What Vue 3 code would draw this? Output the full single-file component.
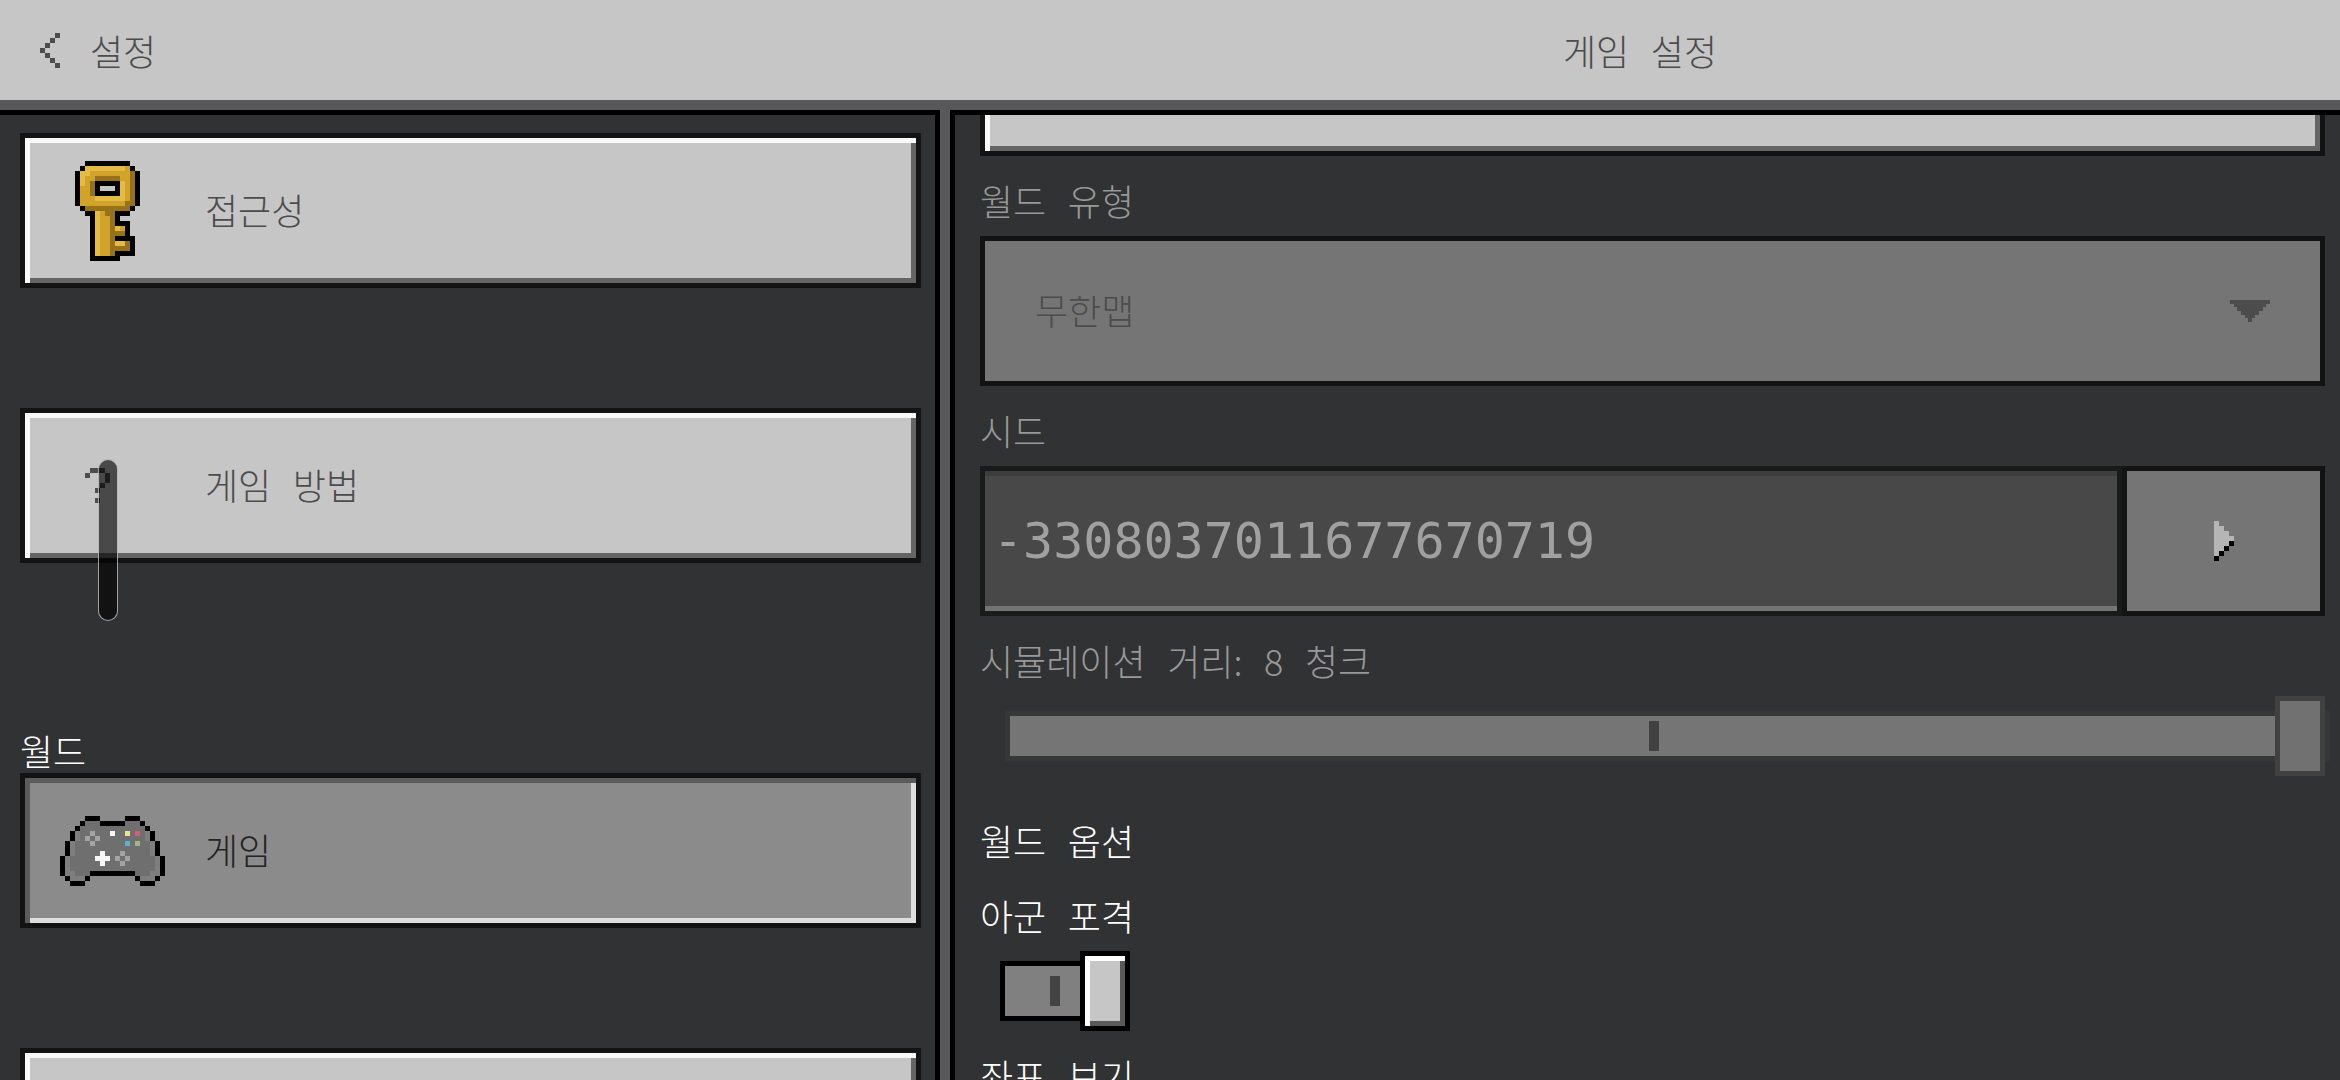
<script setup>
import { h, ref } from 'vue'

const palette = {
    K: '#000000',
    L: '#e4bb47',
    M: '#d2a32b',
    D: '#987219',
    G: '#6f6f6f',
    H: '#7e7e7e',
    S: '#a3a3a3',
    W: '#f6f6f6',
    Y: '#e6e394',
    R: '#d0607a',
    B: '#5fb0cf',
    N: '#9cb783',
    Q: '#4c4c4c',
    P: '#b5b5b5',
}

const icons = {
    back: ['...Q', '..Q.', '.Q..', 'Q...', '.Q..', '..Q.', '...Q'],
    key: [
        '.....KKKKKKKKK.......',
        '....KLLLLLLLLMK......',
        '...KLLMMMMMMMMDK.....',
        '...KLMMDDDDDMMDK.....',
        '...KLMDKKKKKLMDK.....',
        '...KMMDK...KLMDK.....',
        '...KMMDKKKKKLMDK.....',
        '...KMMMLLLLLLMDK.....',
        '...KMMMMMMMMMDDK.....',
        '....KDDDDDDDDDK......',
        '.....KKLMDDKKK.......',
        '......KLMMDK.........',
        '......KLMMDKKK.......',
        '......KLMMDLMK.......',
        '......KLMMDDDK.......',
        '......KLMMDKKKK......',
        '......KLMMDLLDK......',
        '......KLMMDDDDK......',
        '......KLMMDKKKK......',
        '......KKKKKK.........',
    ],
    help: [
        '......QQQ............',
        '.....Q...Q...........',
        '.........Q...........',
        '........Q............',
        '.......Q.............',
        '.....................',
        '.......Q.............',
    ],
    gamepad: [
        '.....KKK.....KKK.....',
        '....KGGGKKKKKGGGK....',
        '...KGGGGGGGGGGGGGK...',
        '..KHGGSGGGWGGYGRGHK..',
        '..KHGSGSGGGGGGGGGHK..',
        '.KHGGGSGGGGGGBGNGGHK.',
        '.KHGGGGGGGGGGGGGGGHK.',
        '.KHGGGGGWGGGSGGGGGHK.',
        'KHGGGGGWWWGSGSGGGGGHK',
        'KHGGGGGGWGGGSGGGGGGHK',
        'KHGGGGGGGGGGGGGGGGGHK',
        'KHHGGGKKKKKKKKKGGGHHK',
        '.KHHHK.........KHHHK.',
        '..KKK...........KKK..',
    ],
    play: ['P...', 'PP..', 'PPP.', 'PPPP', 'PPPK', 'PPK.', 'PK..', 'K...'],
}

// Draws one square of 5px for each letter of the icon's rows
const PixelIcon = ({ name }) => {
    const rows = icons[name]
    const width = rows[0].length
    const rects = []
    rows.forEach((row, y) => {
        row.split('').forEach((cell, x) => {
            if (cell !== '.') {
                rects.push(h('rect', { x, y, width: 1, height: 1, fill: palette[cell] }))
            }
        })
    })
    return h(
        'svg',
        {
            viewBox: `0 0 ${width} ${rows.length}`,
            width: width * 5,
            height: rows.length * 5,
            'shape-rendering': 'crispEdges',
            'aria-hidden': 'true',
        },
        rects
    )
}
PixelIcon.props = ['name']

const selected = ref('game')
const worldType = ref('infinite')
const seed = ref('-3308037011677670719')
const distance = ref(8)
const options = ref([
    { id: 'friendly-fire', label: '아군 포격', on: true },
    { id: 'coordinates', label: '좌표 보기', on: true },
])
</script>

<template>
    <div class="screen">
        <header class="header">
            <button class="back" type="button">
                <PixelIcon name="back" />
                <span class="caption">설정</span>
            </button>
            <h1 class="title caption">게임 설정</h1>
        </header>

        <div class="panels">
            <nav class="sidebar">
                <button
                    class="tile"
                    :class="{ active: selected === 'access' }"
                    type="button"
                    @click="selected = 'access'"
                >
                    <PixelIcon name="key" />
                    <span class="caption">접근성</span>
                </button>
                <button
                    class="tile"
                    :class="{ active: selected === 'help' }"
                    type="button"
                    @click="selected = 'help'"
                >
                    <PixelIcon name="help" />
                    <span class="caption">게임 방법</span>
                </button>
                <section class="group">
                    <h2 class="group-title">월드</h2>
                    <button
                        class="tile"
                        :class="{ active: selected === 'game' }"
                        type="button"
                        @click="selected = 'game'"
                    >
                        <PixelIcon name="gamepad" />
                        <span class="caption">게임</span>
                    </button>
                </section>
                <button class="tile" type="button"></button>
                <div class="scroll-thumb"></div>
            </nav>

            <main class="content">
                <form class="form" @submit.prevent>
                    <button class="tile" type="button"></button>

                    <label class="label muted" for="world-type">월드 유형</label>
                    <div class="dropdown">
                        <select id="world-type" v-model="worldType" class="select" disabled>
                            <option value="infinite">무한맵</option>
                        </select>
                        <svg
                            class="arrow"
                            viewBox="0 0 11 6"
                            preserveAspectRatio="none"
                            shape-rendering="crispEdges"
                            aria-hidden="true"
                        >
                            <path d="M0 0H11V1H10V2H9V3H8V4H7V5H6V6H5V5H4V4H3V3H2V2H1V1H0Z" />
                        </svg>
                    </div>

                    <label class="label muted" for="seed">시드</label>
                    <div class="seed-row">
                        <input id="seed" v-model="seed" class="seed" type="text" disabled />
                        <button class="seed-button" type="button" disabled>
                            <PixelIcon name="play" />
                        </button>
                    </div>

                    <label class="label muted" for="distance">
                        시뮬레이션 거리<span class="thin">:</span> <span class="thin">{{ distance }}</span> 청크
                    </label>
                    <input
                        id="distance"
                        v-model="distance"
                        class="slider"
                        type="range"
                        min="4"
                        max="8"
                        disabled
                    />

                    <h2 class="section-title">월드 옵션</h2>
                    <template v-for="option in options" :key="option.id">
                        <label class="label" :for="option.id">{{ option.label }}</label>
                        <input :id="option.id" v-model="option.on" class="toggle" type="checkbox" />
                    </template>
                </form>
            </main>
        </div>
    </div>
</template>

<style>
body {
    margin: 0;
    background: #313233;
}
</style>

<style scoped>
.screen {
    display: flex;
    flex-direction: column;
    height: 100vh;
    overflow: hidden;
    background: #313233;
    color: #ffffff;
    font-family: 'Liberation Mono', 'Noto Sans CJK KR', monospace;
    font-size: 36px;
    font-weight: 300;
    line-height: 40px;
}

.screen *,
.screen *::before,
.screen *::after {
    box-sizing: border-box;
}

button,
input,
select {
    margin: 0;
    padding: 0;
    border: 0;
    border-radius: 0;
    color: inherit;
    font: inherit;
}

h1,
h2 {
    margin: 0;
    font-size: 36px;
    font-weight: 300;
}

.header {
    display: grid;
    grid-template-columns: 94fr 140fr;
    flex: none;
    align-items: center;
    height: 110px;
    border-bottom: 10px solid #58575a;
    background: #c6c6c6;
    color: #4c4c4c;
}

.back {
    display: flex;
    align-items: center;
    justify-self: start;
    gap: 30px;
    padding: 0 40px;
    background: none;
}

.title {
    text-align: center;
}

/* Hangul sits high on the mono font's baseline */
.caption {
    padding-top: 10px;
}

.header .caption {
    padding-top: 14px;
}

.thin {
    font-family: 'Noto Sans CJK KR', sans-serif;
    line-height: 0;
}

.panels {
    display: grid;
    grid-template-columns: 94fr 139fr;
    flex: 1;
    gap: 10px;
    min-height: 0;
    background: #58575a;
}

.sidebar {
    position: relative;
    display: flex;
    flex-direction: column;
    gap: 120px;
    padding: 18px 14px 0 20px;
    overflow: hidden;
    border-top: 5px solid #000000;
    border-right: 5px solid #000000;
    background: #313233;
}

.group {
    padding-top: 58px;
}

.group-title {
    line-height: 32px;
}

.tile {
    display: flex;
    flex: none;
    align-items: center;
    gap: 40px;
    width: 100%;
    height: 155px;
    padding-left: 35px;
    border: 5px solid #131313;
    background: #c6c6c6;
    box-shadow: inset 5px 5px 0 #f9f9f9, inset -5px -5px 0 #656565;
    color: #4c4c4c;
}

.tile.active {
    background: #8b8b8b;
    box-shadow: inset 5px 5px 0 #5c5c5c, inset -5px -5px 0 #dedede;
    color: #232323;
}

.scroll-thumb {
    position: absolute;
    top: 344px;
    left: 98px;
    width: 20px;
    height: 162px;
    border: 1px solid rgba(255, 255, 255, 0.6);
    border-radius: 10px;
    background: rgba(0, 0, 0, 0.63);
}

.content {
    padding: 0 15px 0 25px;
    overflow: hidden;
    border-top: 5px solid #000000;
    border-left: 5px solid #000000;
    background: #313233;
}

/* The list is scrolled, so the first tile is partly under the header */
.form {
    display: flex;
    flex-direction: column;
    margin-top: -114px;
}

.label {
    height: 80px;
    padding: 31px 0 9px;
}

.muted {
    color: #989898;
}

.dropdown {
    display: grid;
    align-items: center;
}

.select {
    grid-area: 1 / 1;
    width: 100%;
    height: 150px;
    padding: 10px 50px 0;
    border: 5px solid #131313;
    background: #757575;
    color: #4c4c4c;
    appearance: none;
    opacity: 1;
}

.arrow {
    grid-area: 1 / 1;
    justify-self: end;
    width: 40px;
    height: 22px;
    margin-right: 55px;
    fill: #4c4c4c;
    pointer-events: none;
}

.seed-row {
    display: flex;
}

.seed {
    flex: 1;
    min-width: 0;
    height: 150px;
    padding: 0 8px;
    border: 5px solid #191b1b;
    background: #484848;
    box-shadow: inset 0 5px 0 #3d3d3d, inset 0 -5px 0 #737373;
    color: #a0a0a0;
    font-family: 'DejaVu Sans Mono', monospace;
    font-size: 50px;
}

.seed-button {
    display: flex;
    align-items: center;
    justify-content: center;
    width: 203px;
    height: 150px;
    border: 5px solid #131313;
    background: #757575;
}

.slider {
    height: 80px;
    margin-left: 30px;
    background: none;
    appearance: none;
}

.slider::-webkit-slider-runnable-track {
    height: 40px;
    background: linear-gradient(#414141, #414141) 49% 50% / 10px 30px no-repeat #757575;
    box-shadow: 0 0 0 5px #363737;
}

.slider::-webkit-slider-thumb {
    width: 50px;
    height: 80px;
    margin-top: -20px;
    border: 5px solid #414141;
    border-radius: 0;
    background: #717171;
    appearance: none;
}

.section-title {
    padding: 51px 0 4px;
}

.toggle {
    display: flex;
    flex: none;
    align-items: center;
    align-self: flex-start;
    width: 130px;
    height: 80px;
    margin-left: 20px;
    appearance: none;
}

.toggle::before {
    width: 85px;
    height: 60px;
    border: 5px solid #000000;
    background: linear-gradient(#434343, #434343) 45px 50% / 10px 30px no-repeat #808080;
    content: '';
}

.toggle::after {
    width: 50px;
    height: 80px;
    margin-left: -5px;
    border: 5px solid #000000;
    background: #c6c6c6;
    box-shadow: inset 5px 5px 0 #ffffff, inset -5px -5px 0 #5a5a5a;
    content: '';
}
</style>
